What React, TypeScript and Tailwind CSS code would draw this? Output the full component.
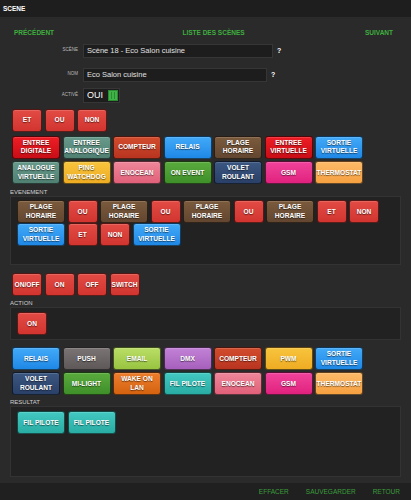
import * as React from 'react';

type Tone =
  | 'red' | 'digital' | 'teal' | 'compteur' | 'blue' | 'brown' | 'yellow' | 'pink'
  | 'green' | 'navy' | 'magenta' | 'orange' | 'gray' | 'lime' | 'purple' | 'wake' | 'fil';

const tones: Record<Tone, string> = {
  red: 'from-[#e24b44] to-[#d2342f]',
  digital: 'from-[#ef1d25] to-[#c80d16]',
  teal: 'from-[#689a8b] to-[#4f8072]',
  compteur: 'from-[#d24c2d] to-[#b83420]',
  blue: 'from-[#42aaf8] to-[#1e88e6]',
  brown: 'from-[#7b5b3d] to-[#634630]',
  yellow: 'from-[#f7c43c] to-[#eeac22]',
  pink: 'from-[#ef8699] to-[#e0607a]',
  green: 'from-[#5aab3d] to-[#3f8f2a]',
  navy: 'from-[#3b5781] to-[#2a4068]',
  magenta: 'from-[#f1429b] to-[#e0207e]',
  orange: 'from-[#fcba68] to-[#f6a040]',
  gray: 'from-[#7a7474] to-[#5e5858]',
  lime: 'from-[#bade66] to-[#98c440]',
  purple: 'from-[#c282d6] to-[#a660bc]',
  wake: 'from-[#ed7e2c] to-[#d4620e]',
  fil: 'from-[#42c9c1] to-[#28aca4]',
};

function Btn({ label, tone, wide }: { label: string; tone: Tone; wide?: boolean }) {
  const lines = label.split('|');
  return (
    <div
      className={`${wide ? 'w-[48px]' : 'w-[30px]'} h-[23px] shrink-0 rounded-[3px] border border-black/60 bg-linear-to-b ${tones[tone]} flex flex-col items-center justify-center text-white font-bold text-[6.6px] leading-[8.5px] whitespace-nowrap [text-shadow:0_1px_1px_rgba(0,0,0,0.55)] shadow-[inset_0_1px_0_rgba(255,255,255,0.15)]`}
    >
      {lines.map((l) => (
        <span key={l}>{l}</span>
      ))}
    </div>
  );
}

const logic: [string, Tone][] = [['ET', 'red'], ['OU', 'red'], ['NON', 'red']];

const eventTypes: [string, Tone][] = [
  ['ENTREE|DIGITALE', 'digital'],
  ['ENTREE|ANALOGIQUE', 'teal'],
  ['COMPTEUR', 'compteur'],
  ['RELAIS', 'blue'],
  ['PLAGE|HORAIRE', 'brown'],
  ['ENTREE|VIRTUELLE', 'digital'],
  ['SORTIE|VIRTUELLE', 'blue'],
  ['ANALOGUE|VIRTUELLE', 'teal'],
  ['PING|WATCHDOG', 'yellow'],
  ['ENOCEAN', 'pink'],
  ['ON EVENT', 'green'],
  ['VOLET|ROULANT', 'navy'],
  ['GSM', 'magenta'],
  ['THERMOSTAT', 'orange'],
];

const eventChain: [string, Tone, boolean][] = [
  ['PLAGE|HORAIRE', 'brown', true],
  ['OU', 'red', false],
  ['PLAGE|HORAIRE', 'brown', true],
  ['OU', 'red', false],
  ['PLAGE|HORAIRE', 'brown', true],
  ['OU', 'red', false],
  ['PLAGE|HORAIRE', 'brown', true],
  ['ET', 'red', false],
  ['NON', 'red', false],
  ['SORTIE|VIRTUELLE', 'blue', true],
  ['ET', 'red', false],
  ['NON', 'red', false],
  ['SORTIE|VIRTUELLE', 'blue', true],
];

const actions = ['ON/OFF', 'ON', 'OFF', 'SWITCH'];

const resultTypes: [string, Tone][] = [
  ['RELAIS', 'blue'],
  ['PUSH', 'gray'],
  ['EMAIL', 'lime'],
  ['DMX', 'purple'],
  ['COMPTEUR', 'compteur'],
  ['PWM', 'yellow'],
  ['SORTIE|VIRTUELLE', 'blue'],
  ['VOLET|ROULANT', 'navy'],
  ['MI-LIGHT', 'green'],
  ['WAKE ON|LAN', 'wake'],
  ['FIL PILOTE', 'fil'],
  ['ENOCEAN', 'pink'],
  ['GSM', 'magenta'],
  ['THERMOSTAT', 'orange'],
];

function FieldRow({ label, children }: { label: string; children: React.ReactNode }) {
  return (
    <div className="flex items-center">
      <div className="w-[73px] pr-[5px] text-right text-[4.5px] text-[#bbb] uppercase">{label}</div>
      {children}
    </div>
  );
}

export default function App() {
  return (
    <div
      className="w-[411px] h-[500px] bg-[#2a2a2a] flex flex-col overflow-hidden"
      style={{ fontFamily: '"Liberation Sans", Arial, sans-serif' }}
    >
      {/* Header */}
      <header className="h-[17px] shrink-0 bg-[#1e1e1e] px-[3px] flex items-center text-white font-bold text-[6.5px]">
        SCENE
      </header>

      <main className="flex-1 px-[10px]">
        {/* Navigation */}
        <div className="mt-[11px] px-[4px] flex justify-between items-center text-[6.5px] font-bold text-[#3fae3f]">
          <span>PRÉCÉDENT</span>
          <span className="pl-[8px]">LISTE DES SCÈNES</span>
          <span className="pr-[4px]">SUIVANT</span>
        </div>

        {/* Scene form */}
        <div className="mt-[6px] flex flex-col gap-[10px]">
          <FieldRow label="Scène">
            <div className="w-[190px] h-[14px] bg-[#1d1d1d] border border-[#363636] px-[3px] flex items-center text-[7.5px] text-[#e0e0e0]">
              Scène 18 - Eco Salon cuisine
            </div>
            <span className="ml-[4px] text-[7px] font-bold text-white">?</span>
          </FieldRow>
          <FieldRow label="Nom">
            <div className="w-[184px] h-[14px] bg-[#1d1d1d] border border-[#363636] px-[3px] flex items-center text-[7.5px] text-[#e0e0e0]">
              Eco Salon cuisine
            </div>
            <span className="ml-[4px] text-[7px] font-bold text-white">?</span>
          </FieldRow>
          <div className="-mt-[4px]">
            <FieldRow label="Activé">
              <div className="w-[37px] h-[15px] bg-[#1d1d1d] border border-[#363636] pl-[3px] flex items-center gap-[5px]">
                <span className="text-[9px] text-white">OUI</span>
                <div className="w-[10px] h-[11px] bg-[#3fb347] border border-[#2b8a32] flex items-center justify-center gap-[2px]">
                  <div className="w-[1px] h-[7px] bg-[#2b8a32]" />
                  <div className="w-[1px] h-[7px] bg-[#2b8a32]" />
                </div>
              </div>
            </FieldRow>
          </div>
        </div>

        {/* Logic operators */}
        <div className="mt-[6px] pl-[2px] flex gap-[2.5px]">
          {logic.map(([l, t]) => (
            <Btn key={l} label={l} tone={t} />
          ))}
        </div>

        {/* Event types */}
        <div className="mt-[4px] pl-[2px] flex flex-wrap gap-[2.5px] w-[355px]">
          {eventTypes.map(([l, t]) => (
            <Btn key={l} label={l} tone={t} wide />
          ))}
        </div>

        <div className="mt-[4px] text-[6px] leading-[8px] text-[#cfcfcf]">EVENEMENT</div>
        <div className="h-[69px] bg-[#222] border border-[#333] pl-[6px] pt-[3px]">
          <div className="flex flex-wrap gap-x-[2.5px] w-[370px]">
            {eventChain.map(([l, t, w], i) => (
              <Btn key={i} label={l} tone={t} wide={w} />
            ))}
          </div>
        </div>

        {/* Actions */}
        <div className="mt-[8px] pl-[2px] flex gap-[2.5px]">
          {actions.map((a) => (
            <Btn key={a} label={a} tone="red" />
          ))}
        </div>
        <div className="mt-[3px] text-[6px] leading-[8px] text-[#cfcfcf]">ACTION</div>
        <div className="h-[33px] bg-[#222] border border-[#333] pl-[6px] pt-[4px]">
          <Btn label="ON" tone="red" />
        </div>

        {/* Result types */}
        <div className="mt-[7px] pl-[2px] flex flex-wrap gap-x-[2.5px] gap-y-[2px] w-[355px]">
          {resultTypes.map(([l, t]) => (
            <Btn key={l} label={l} tone={t} wide />
          ))}
        </div>
        <div className="mt-[3px] text-[6px] leading-[8px] text-[#cfcfcf]">RESULTAT</div>
        <div className="h-[71px] bg-[#222] border border-[#333] pl-[6px] pt-[4px]">
          <div className="flex gap-[2.5px]">
            <Btn label="FIL PILOTE" tone="fil" wide />
            <Btn label="FIL PILOTE" tone="fil" wide />
          </div>
        </div>
      </main>

      {/* Footer */}
      <footer className="h-[17px] shrink-0 bg-[#202020] pr-[11px] flex items-center justify-end gap-[17px] text-[6.5px] text-[#3a9e3a]">
        <span>EFFACER</span>
        <span>SAUVEGARDER</span>
        <span>RETOUR</span>
      </footer>
    </div>
  );
}
